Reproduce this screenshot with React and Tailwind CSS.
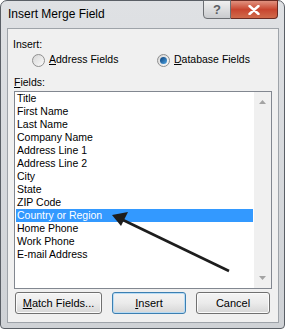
import React from 'react';

const fields = [
  'Title',
  'First Name',
  'Last Name',
  'Company Name',
  'Address Line 1',
  'Address Line 2',
  'City',
  'State',
  'ZIP Code',
  'Country or Region',
  'Home Phone',
  'Work Phone',
  'E-mail Address'
];

const Radio = ({ checked }) => (
  <span className="w-[13px] h-[13px] rounded-full border border-[#8f8f8f] bg-gradient-to-br from-[#d6d6d6] to-[#fbfbfb] flex items-center justify-center">
    {checked && (
      <span className="w-[7px] h-[7px] rounded-full bg-gradient-to-br from-[#0b3f78] to-[#4fa6e6]" />
    )}
  </span>
);

const Button = ({ children, focused, width }) => (
  <button
    className={`${width} h-[22px] whitespace-nowrap rounded-[3px] border text-[11px] text-black bg-gradient-to-b from-[#f4f4f4] via-[#ebebeb] to-[#d6d6d6] ${
      focused ? 'border-[#3c7fb1] shadow-[inset_0_0_0_1px_#b8dcf5]' : 'border-[#707070] shadow-[inset_0_0_0_1px_#fbfbfb]'
    }`}
  >
    {children}
  </button>
);

export default function App() {
  return (
    <div className="w-[285px] h-[330px] bg-white" style={{ fontFamily: '"Liberation Sans", Arial, sans-serif' }}>
      <div className="w-[285px] h-[329px] rounded-t-[7px] rounded-b-[4px] border border-[#5a5f66] bg-gradient-to-b from-[#dfe1e4] to-[#cfd2d6] flex flex-col">
        {/* title bar */}
        <div className="h-[27px] flex items-start justify-between">
          <span className="ml-[7px] mt-[6px] text-[12px] leading-[14px] text-black">Insert Merge Field</span>
          <div className="flex mr-[6px] -mt-[1px]">
            <div className="w-[28px] h-[19px] rounded-bl-[4px] border border-[#6c6f73] bg-gradient-to-b from-[#f0f0f0] to-[#c9cbce] flex items-center justify-center text-[13px] font-bold text-[#5c5f63]">
              ?
            </div>
            <div className="w-[47px] h-[19px] rounded-br-[4px] border border-l-0 border-[#6a2a22] bg-gradient-to-b from-[#e0917f] via-[#c8452f] to-[#d06a4b] flex items-center justify-center">
              <svg width="12" height="10" viewBox="0 0 12 10">
                <path d="M1.5 1 L10.5 9 M10.5 1 L1.5 9" stroke="#fff" strokeWidth="2.4" strokeLinecap="round" />
              </svg>
            </div>
          </div>
        </div>

        {/* content */}
        <div className="ml-[6px] w-[272px] h-[295px] border border-[#9ea3a9] bg-[#f0f0f0] flex flex-col text-[10.5px] text-black">
          <div className="ml-[5px] mt-[8px] h-[14px] leading-[14px]">Insert:</div>
          <div className="mt-[2px] h-[14px] flex items-center">
            <div className="ml-[24px] w-[125px] flex items-center gap-[4px]">
              <Radio />
              <span><u>A</u>ddress Fields</span>
            </div>
            <div className="flex items-center gap-[4px]">
              <Radio checked />
              <span><u>D</u>atabase Fields</span>
            </div>
          </div>
          <div className="ml-[6px] mt-[8px] h-[14px] leading-[14px]"><u>F</u>ields:</div>

          {/* list box */}
          <div className="relative ml-[6px] mt-[2px] w-[258px] h-[198px] border border-[#828790] bg-white flex">
            <div className="flex-1 flex flex-col px-[1px]">
              {fields.map((f) => (
                <div
                  key={f}
                  className={`h-[13px] leading-[13px] pl-[1px] ${
                    f === 'Country or Region' ? 'bg-[#3399ff] text-white' : 'text-black'
                  }`}
                >
                  {f}
                </div>
              ))}
            </div>
            <div className="w-[17px] bg-[#f0f0f0] flex flex-col justify-between items-center py-[8px]">
              <svg width="7" height="4" viewBox="0 0 7 4">
                <path d="M0 4 L3.5 0 L7 4 Z" fill="#a3a3a3" />
              </svg>
              <svg width="7" height="4" viewBox="0 0 7 4">
                <path d="M0 0 L3.5 4 L7 0 Z" fill="#a3a3a3" />
              </svg>
            </div>
            <svg className="absolute left-0 top-0" width="258" height="198" viewBox="0 0 258 198">
              <path d="M214 179 L108 128" stroke="#1d1d1d" strokeWidth="2.6" />
              <path d="M97 123 L113 120 L106 134 Z" fill="#1d1d1d" />
            </svg>
          </div>

          <div className="mt-[3px] ml-[7px] flex gap-[10px]">
            <Button width="w-[87px]"><u>M</u>atch Fields...</Button>
            <Button width="w-[74px]" focused><u>I</u>nsert</Button>
            <Button width="w-[74px]">Cancel</Button>
          </div>
        </div>
      </div>
    </div>
  );
}
